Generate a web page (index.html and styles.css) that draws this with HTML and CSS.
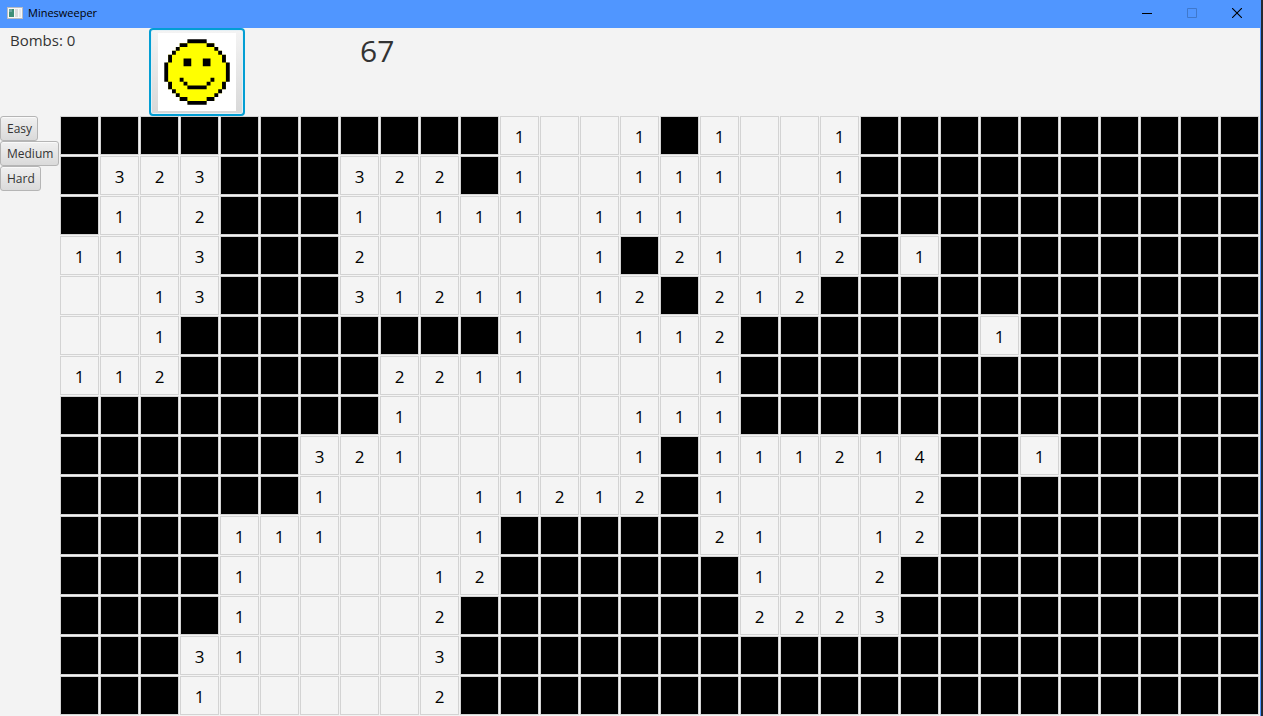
FILE: index.html
```html
<!DOCTYPE html>
<html lang="en">
<head>
<meta charset="utf-8">
<title>Minesweeper</title>
<link rel="stylesheet" href="styles.css">
</head>
<body>
<div class="window">
  <header class="titlebar">
    <svg class="app-icon" width="16" height="12" viewBox="0 0 16 12" aria-hidden="true">
      <rect width="16" height="12" fill="#b9bcc2"/>
      <rect x="1" y="1" width="14" height="10" fill="#f8f8f8"/>
      <rect x="2" y="2" width="5" height="8" fill="#3f8f78"/>
      <rect x="2" y="2" width="3" height="3" fill="#6aa5a0"/>
      <rect x="8" y="2" width="3" height="8" fill="#dcdcdc"/>
      <rect x="12" y="2" width="2" height="8" fill="#e8e8e8"/>
    </svg>
    <h1 class="title">Minesweeper</h1>
    <button class="caption" type="button" aria-label="Minimize">
      <svg width="10" height="10" viewBox="0 0 10 10" shape-rendering="crispEdges"><path d="M0 5h10v1H0z"/></svg>
    </button>
    <button class="caption" type="button" aria-label="Maximize" disabled>
      <svg width="10" height="10" viewBox="0 0 10 10" fill="none" stroke="#3f78cc"><path d="M.5.5h9v9h-9z"/></svg>
    </button>
    <button class="caption" type="button" aria-label="Close">
      <svg width="10" height="10" viewBox="0 0 10 10" stroke="#000" stroke-width="1.1"><path d="M0 0l10 10M10 0L0 10"/></svg>
    </button>
  </header>
  <section class="status">
    <p class="bombs">Bombs: 0</p>
    <button class="face" type="button" aria-label="New game">
      <svg width="78" height="78" viewBox="0 0 78 78" aria-hidden="true">
        <rect width="78" height="78" fill="#fff"/>
        <g transform="translate(6.3 6.3) scale(3.85)">
          <path fill="#ff0" d="M6 .5h5v.5h2v1h1v1h1v1h1v2h.5v5H16v2h-1v1h-1v1h-1v1h-2v.5H6V16H4v-1H3v-1H2v-1H1v-2H.5V6H1V4h1V3h1V2h1V1h2z"/>
          <path fill="#000" d="M6 0h5v1H6zM4 1h2v1H4zM11 1h2v1h-2zM3 2h1v1H3zM13 2h1v1h-1zM2 3h1v1H2zM14 3h1v1h-1zM1 4h1v2H1zM15 4h1v2h-1zM0 6h1v5H0zM16 6h1v5h-1zM1 11h1v2H1zM15 11h1v2h-1zM2 13h1v1H2zM14 13h1v1h-1zM3 14h1v1H3zM13 14h1v1h-1zM4 15h2v1H4zM11 15h2v1h-2zM6 16h5v1H6zM5 5h2v2H5zM10 5h2v2h-2zM4 10h1v1H4zM12 10h1v1h-1zM5 11h1v1H5zM11 11h1v1h-1zM6 12h5v1H6z"/>
        </g>
      </svg>
    </button>
    <p class="timer">67</p>
  </section>
  <main class="game">
    <nav class="levels" aria-label="Difficulty">
      <button class="level" type="button">Easy</button>
      <button class="level" type="button">Medium</button>
      <button class="level" type="button">Hard</button>
    </nav>
    <div class="board" id="board"></div>
  </main>
</div>
<script src="board.js"></script>
</body>
</html>
```

FILE: styles.css
```css
* {
  box-sizing: border-box;
}

body {
  margin: 0;
  background: #252b33;
  color: #333;
  font-family: "Open Sans", "Noto Sans", sans-serif;
}

.window {
  min-height: 100vh;
  margin-right: 2px;
  border-right: 1px solid #5096ff;
  background: #f3f3f3;
}

.titlebar {
  display: flex;
  align-items: center;
  height: 28px;
  margin-right: -1px;
  padding: 0 2px 3px 7px;
  background: #5096ff;
}

.title {
  flex: 1;
  margin: 0 0 0 5px;
  color: #000;
  font-size: 11px;
  font-weight: 400;
  line-height: 20px;
}

.caption {
  display: grid;
  place-items: center;
  width: 45px;
  height: 24px;
  padding: 0;
  border: 0;
  background: none;
}

.status {
  display: grid;
  grid-template-columns: 149px 96px 1fr;
  align-items: start;
}

.bombs {
  margin: 0;
  padding-left: 10px;
  font-size: 15px;
  line-height: 24px;
}

.face {
  display: grid;
  place-items: center;
  height: 88px;
  padding: 0;
  border: 2px solid #039ed3;
  border-radius: 4px;
  background: linear-gradient(#f4f4f4, #d8d8d8);
  box-shadow: inset 0 0 0 1px #e4f0f5;
}

.timer {
  margin: 0;
  padding-left: 115px;
  font-size: 30px;
  line-height: 46px;
}

.game {
  display: grid;
  grid-template-columns: 60px 1fr;
}

.levels {
  display: flex;
  flex-direction: column;
  align-items: flex-start;
}

.level {
  height: 25px;
  padding: 0 5px 0 6px;
  border: 1px solid #b5b5b5;
  border-radius: 3px;
  background: linear-gradient(#f0f0f0, #dadada);
  box-shadow: inset 0 1px #fafafa;
  color: #333;
  font: 12px/20px "Open Sans", "Noto Sans", sans-serif;
}

.board {
  display: grid;
  grid-template-columns: repeat(30, 1fr);
  gap: 1px;
  padding: 0 1px 1px 0;
}

.cell {
  display: grid;
  place-items: center;
  min-width: 0;
  aspect-ratio: 1;
  padding: 2px 0 0;
  border: 1px solid #d3d3d3;
  border-radius: 0;
  background: #f4f4f4;
  color: #000;
  font: 17px/24px "Open Sans", "Noto Sans", sans-serif;
}

.covered {
  background: #000;
}
```

FILE: board.js
```js
// "#" is a covered square, "." an open empty one, a digit the count of nearby bombs.
const rows = [
  "###########1..1#1..1##########",
  "#323###322#1..111..1##########",
  "#1.2###1.111.111...1##########",
  "11.3###2.....1#21.12#1########",
  "..13###31211.12#212###########",
  "..1########1..112######1######",
  "112#####2211....1#############",
  "########1.....111#############",
  "######321.....1#111214##1#####",
  "######1...11212#1....2########",
  "####111...1#####21..12########",
  "####1....12######1..2#########",
  "####1....2#######2223#########",
  "###31....3####################",
  "###1.....2####################"
];

const board = document.getElementById("board");

rows.forEach((row, y) => {
  [...row].forEach((mark, x) => {
    const covered = mark === "#";
    const cell = document.createElement(covered ? "button" : "div");
    cell.className = covered ? "cell covered" : "cell";
    if (covered) {
      cell.type = "button";
      cell.setAttribute("aria-label", `Covered, row ${y + 1}, column ${x + 1}`);
    } else if (mark !== ".") {
      cell.textContent = mark;
    }
    board.append(cell);
  });
});
```
